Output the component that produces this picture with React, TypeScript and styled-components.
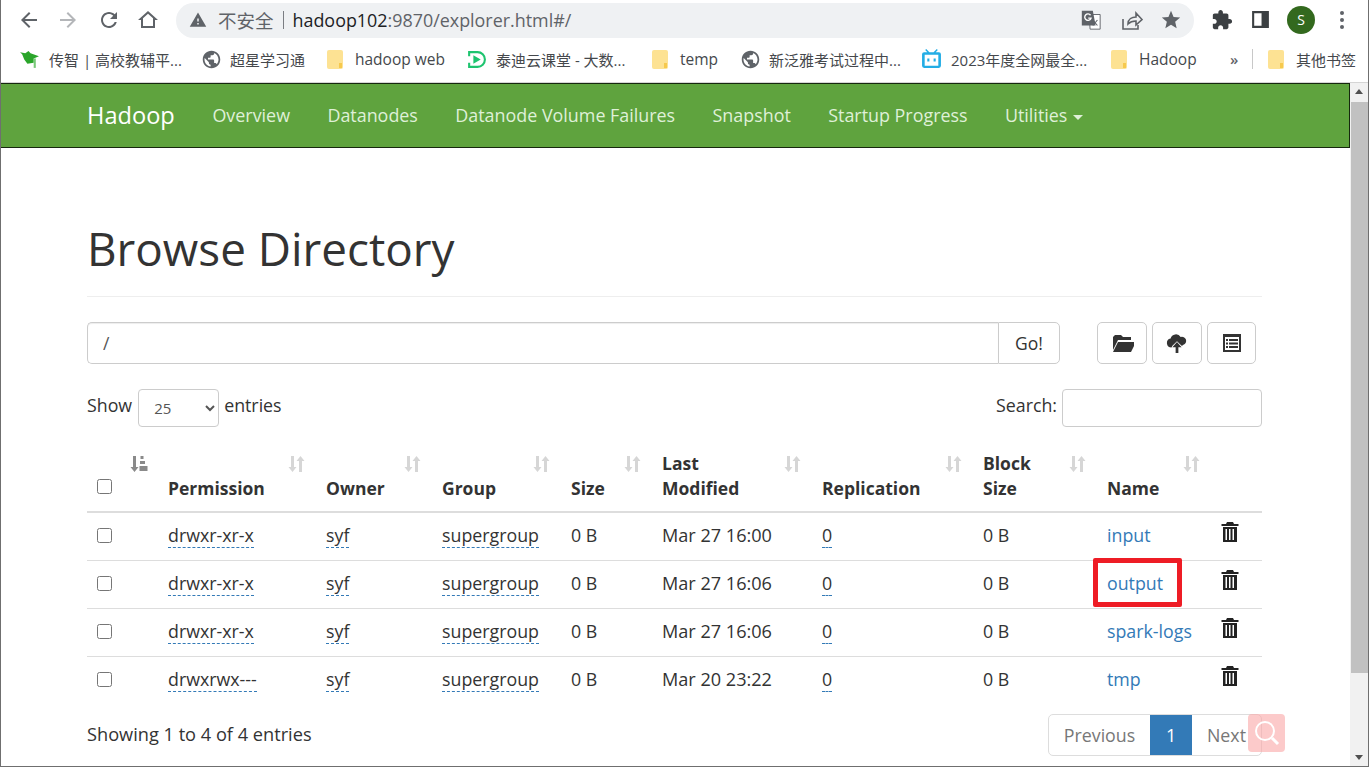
import React from 'react'
import styled, { createGlobalStyle } from 'styled-components'

const GlobalStyle = createGlobalStyle`
  html, body {
    margin: 0;
    height: 100%;
    overflow: hidden;
    background: #fff;
  }
  * {
    box-sizing: border-box;
  }
`

const Window = styled.div`
  width: 1369px;
  height: 767px;
  display: flex;
  flex-direction: column;
  overflow: hidden;
  background: #fff;
  border-left: 1px solid #6f6f6f;
  border-right: 1px solid #6f6f6f;
  border-bottom: 1px solid #6f6f6f;
  font-family: 'Open Sans', 'Noto Sans CJK SC', sans-serif;
  color: #333;
`

const Toolbar = styled.div`
  height: 39px;
  flex: none;
  display: flex;
  align-items: center;
  padding: 0 0 0 16px;
`

const ToolIcon = styled.svg<{ $size?: number; $gap?: number; $color?: string }>`
  width: ${(p) => p.$size ?? 24}px;
  height: ${(p) => p.$size ?? 24}px;
  margin-right: ${(p) => p.$gap ?? 0}px;
  fill: ${(p) => p.$color ?? '#5f6368'};
  flex: none;
`

const Omnibox = styled.div`
  width: 1018px;
  height: 35px;
  margin: 1px 17px 0 16px;
  padding: 0 12px 0 13px;
  border-radius: 18px;
  background: #eff1f3;
  display: flex;
  align-items: center;
  font-size: 17.9px;
  color: #5f6368;
  white-space: nowrap;
`

const Insecure = styled.span`
  margin-left: 11px;
  font-size: 18.5px;
`

const Divider = styled.span`
  width: 1px;
  height: 18px;
  margin: 0 9px 0 9px;
  background: #7a7d82;
`

const Host = styled.span`
  color: #202124;
`

const OmniIcons = styled.div`
  margin-left: auto;
  display: flex;
  align-items: center;
  gap: 17px;
`

const Avatar = styled.div`
  width: 28px;
  height: 28px;
  margin: 0 15px 0 16px;
  border-radius: 50%;
  background: #33691e;
  color: #fff;
  font-size: 14px;
  display: flex;
  align-items: center;
  justify-content: center;
`

const Bookmarks = styled.div`
  height: 44px;
  flex: none;
  padding: 0 0 3px 18px;
  display: grid;
  grid-template-columns: 182px 126px 139px 186px 88px 181px 190px 116px 25px 16px 1fr;
  align-items: center;
  border-bottom: 1px solid #d5d5d5;
`

const Bookmark = styled.div<{ $latin?: boolean }>`
  display: flex;
  align-items: center;
  gap: 9px;
  font-size: ${(p) => (p.$latin ? '15.5px' : '15px')};
  color: #45484c;
  white-space: nowrap;
  overflow: hidden;
`

const FolderMark = styled.svg`
  width: 16px;
  height: 19px;
  margin-right: 3px;
  flex: none;
`

const GlobeMark = styled.svg`
  width: 21px;
  height: 21px;
  margin-right: -1px;
  fill: #5f6368;
  flex: none;
`

const Chevron = styled.span`
  margin-left: 3px;
  font-size: 15px;
  font-weight: 600;
  color: #5f6368;
`

const BarRule = styled.span`
  width: 1px;
  height: 20px;
  background: #c8c8c8;
`

const Viewport = styled.div`
  flex: 1;
  min-height: 0;
  display: flex;
  position: relative;
`

const Page = styled.div`
  flex: 1;
  min-width: 0;
  font-size: 17.8px;
  line-height: 25px;
`

const Navbar = styled.nav`
  height: 65px;
  display: flex;
  align-items: center;
  padding: 0 0 0 86px;
  background: #5fa33e;
  border: 1px solid #16280e;
  border-left: 0;
`

const Brand = styled.a`
  font-size: 23.6px;
  color: #fff;
  margin-right: 19px;
`

const NavLink = styled.a`
  padding: 0 18.7px;
  color: #dff0d8;
  font-size: 17.9px;
  white-space: nowrap;
`

const Caret = styled.span`
  display: inline-block;
  margin-left: 6px;
  vertical-align: middle;
  border-top: 5px solid #dff0d8;
  border-left: 5px solid transparent;
  border-right: 5px solid transparent;
`

const Container = styled.div`
  width: 1175px;
  margin-left: 86px;
`

const Header = styled.div`
  height: 149px;
  padding-top: 68px;
  border-bottom: 1px solid #eee;
`

const Title = styled.h1`
  margin: 0;
  font-size: 45.8px;
  font-weight: 400;
  line-height: 64px;
  color: #333;
`

const PathRow = styled.div`
  margin-top: 25px;
  display: flex;
  height: 42px;
`

const PathInput = styled.input`
  width: 911px;
  height: 42px;
  padding: 0 15px;
  border: 1px solid #ccc;
  border-right: 0;
  border-radius: 5px 0 0 5px;
  font: inherit;
  font-size: 17.5px;
  color: #555;
  box-shadow: inset 0 1px 1px rgba(0, 0, 0, 0.075);
`

const Button = styled.button<{ $group?: boolean; $narrow?: boolean }>`
  height: 42px;
  padding: 0;
  background: #fff;
  border: 1px solid #ccc;
  border-radius: ${(p) => (p.$group ? '0 5px 5px 0' : '5px')};
  width: ${(p) => (p.$group ? '62px' : p.$narrow ? '49px' : '50px')};
  font: inherit;
  font-size: 17.5px;
  color: #333;
  display: flex;
  align-items: center;
  justify-content: center;
`

const ButtonGroup = styled.div`
  margin-left: 37px;
  display: flex;
  gap: 5px;
`

const FilterRow = styled.div`
  margin-top: 25px;
  height: 38px;
  display: flex;
  align-items: center;
  justify-content: space-between;
`

const FilterGroup = styled.label`
  display: flex;
  align-items: center;
  gap: 5px;
  padding-bottom: 6px;
`

const EntrySelect = styled.select`
  width: 81px;
  height: 38px;
  padding: 0 10px 0 11px;
  margin: 6px 0 0 1px;
  border: 1px solid #ccc;
  border-radius: 4px;
  background: #fff;
  font: inherit;
  font-size: 15px;
  color: #555;
`

const SearchInput = styled.input`
  width: 200px;
  height: 38px;
  margin-top: 6px;
  border: 1px solid #ccc;
  border-radius: 4px;
`

const Table = styled.table`
  width: 1175px;
  margin-top: 19px;
  table-layout: fixed;
  border-collapse: collapse;
`

const HeadCell = styled.th`
  position: relative;
  height: 66px;
  padding: 0 8px 10px;
  text-align: left;
  vertical-align: bottom;
  font-size: 17.5px;
  font-weight: 700;
  white-space: pre-line;
  border-bottom: 2px solid #ddd;
`

const BodyRow = styled.tr`
  height: 48px;
  border-bottom: 1px solid #ddd;

  &:last-child {
    border-bottom: 0;
  }
`

const BodyCell = styled.td`
  position: relative;
  padding: 0 8px 2px;
  white-space: nowrap;
`

const DateCell = styled(BodyCell)`
  font-size: 18.1px;
`

const SortMark = styled.svg<{ $dark?: boolean }>`
  position: absolute;
  top: 9px;
  right: 12px;
  width: 18px;
  height: 18px;
  fill: ${(p) => (p.$dark ? '#8a8a8a' : '#d6d6d6')};
`

const Check = styled.input`
  display: block;
  width: 15px;
  height: 15px;
  margin: 0 0 0 2px;
`

const HeadCheck = styled(Check)`
  margin-bottom: 7px;
`

const Dashed = styled.span`
  display: inline-block;
  line-height: 24px;
  border-bottom: 1px dashed #337ab7;
`

const FileLink = styled.a`
  color: #337ab7;
`

const TrashWrap = styled.span`
  display: block;
  margin-left: -1px;
`

const Highlight = styled.span`
  position: absolute;
  left: -6px;
  top: -3px;
  width: 89px;
  height: 49px;
  border: 5.5px solid #ee1c25;
  border-radius: 2px;
  pointer-events: none;
`

const Footer = styled.div`
  margin-top: 10px;
  display: flex;
  justify-content: space-between;
  align-items: flex-start;
`

const Info = styled.div`
  padding-top: 8px;
  font-size: 18.2px;
`

const Pagination = styled.div`
  display: flex;
  height: 42px;
  border: 1px solid #ddd;
  border-radius: 5px;
`

const PageItem = styled.a<{ $active?: boolean; $width: number }>`
  width: ${(p) => p.$width}px;
  display: flex;
  align-items: center;
  justify-content: center;
  color: ${(p) => (p.$active ? '#fff' : '#777')};
  background: ${(p) => (p.$active ? '#337ab7' : 'transparent')};
`

const Floating = styled.div`
  position: absolute;
  left: 1247px;
  top: 631px;
  width: 37px;
  height: 38px;
  border-radius: 4px;
  background: rgba(250, 170, 170, 0.62);
  display: flex;
  align-items: center;
  justify-content: center;
`

const ScrollTrack = styled.div`
  width: 18px;
  flex: none;
  background: #f1f1f1;
  display: flex;
  flex-direction: column;
  align-items: center;
`

const ScrollArrow = styled.div<{ $down?: boolean }>`
  height: 17px;
  flex: none;
  margin-top: ${(p) => (p.$down ? 'auto' : '0')};
  display: flex;
  align-items: center;

  &::before {
    content: '';
    border-left: 4.5px solid transparent;
    border-right: 4.5px solid transparent;
    border-${(p) => (p.$down ? 'top' : 'bottom')}: 5px solid #505050;
  }
`

const ScrollThumb = styled.div`
  width: 17px;
  height: 571px;
  margin-top: 2px;
  background: #c1c1c1;
`

const Icon = {
  back: 'M20 11H7.83l5.59-5.59L12 4l-8 8 8 8 1.41-1.41L7.83 13H20v-2z',
  reload:
    'M17.65 6.35C16.2 4.9 14.21 4 12 4c-4.42 0-7.99 3.58-7.99 8s3.57 8 7.99 8c3.73 0 6.84-2.55 7.73-6h-2.08c-.82 2.33-3.04 4-5.65 4-3.31 0-6-2.69-6-6s2.69-6 6-6c1.66 0 3.14.69 4.22 1.78L13 11h7V4l-2.35 2.35z',
  home: 'M12 3L2 12h3v8h14v-8h3L12 3zm0 2.7l5 4.5V18H7v-7.8l5-4.5z',
  warning: 'M1 21h22L12 2 1 21zm12-3h-2v-2h2v2zm0-4h-2v-4h2v4z',
  star: 'M12 17.27L18.18 21l-1.64-7.03L22 9.24l-7.19-.61L12 2 9.19 8.63 2 9.24l5.46 4.73L5.82 21z',
  puzzle:
    'M20.5 11H19V7c0-1.1-.9-2-2-2h-4V3.5C13 2.12 11.88 1 10.5 1S8 2.12 8 3.5V5H4c-1.1 0-1.99.9-1.99 2v3.8H3.5c1.49 0 2.7 1.21 2.7 2.7s-1.21 2.7-2.7 2.7H2V20c0 1.1.9 2 2 2h3.8v-1.5c0-1.49 1.21-2.7 2.7-2.7 1.49 0 2.7 1.21 2.7 2.7V22H17c1.1 0 2-.9 2-2v-4h1.5c1.38 0 2.5-1.12 2.5-2.5S21.88 11 20.5 11z',
  globe:
    'M12 2C6.48 2 2 6.48 2 12s4.48 10 10 10 10-4.48 10-10S17.52 2 12 2zm-1 17.93c-3.95-.49-7-3.85-7-7.93 0-.62.08-1.21.21-1.79L9 15v1c0 1.1.9 2 2 2v1.93zm6.9-2.54c-.26-.81-1-1.39-1.9-1.39h-1v-3c0-.55-.45-1-1-1H8v-2h2c.55 0 1-.45 1-1V7h2c1.1 0 2-.9 2-2v-.41c2.93 1.19 5 4.06 5 7.41 0 2.08-.8 3.97-2.1 5.39z',
}

const Folder = () => (
  <FolderMark viewBox="0 0 16 19">
    <path d="M2 0h9l3 0a2 2 0 0 1 2 2v15a2 2 0 0 1-2 2H2a2 2 0 0 1-2-2V2a2 2 0 0 1 2-2z" fill="#fde293" />
    <path d="M12 13h3v5h-3z" fill="#f6c94e" />
  </FolderMark>
)

const Globe = () => (
  <GlobeMark viewBox="0 0 24 24">
    <path d={Icon.globe} />
  </GlobeMark>
)

const SortIcon = ({ dark }: { dark?: boolean }) => (
  <SortMark viewBox="0 0 18 18" $dark={dark}>
    <path d="M3 1h3v11h2.500l-4 5-4-5H3z" />
    {dark ? (
      <path d="M10.500 1h3v3h-3zM10 6h5v3h-5zM9.500 11h8v5h-8z" />
    ) : (
      <path d="M11 6H8.500l4-5 4 5H14v11h-3z" />
    )}
  </SortMark>
)

const TrashIcon = () => (
  <ToolIcon viewBox="0 0 18 20" $size={20} $color="#222">
    <path d="M6 0h6l1 2h4.500v2H.5V2H5zM2 5h14v15H2zm2.500 2v11h1.500V7zm3.500 0v11h1.500V7zm3.500 0v11h1.500V7z" fillRule="evenodd" />
  </ToolIcon>
)

const columns = [73, 158, 116, 129, 91, 160, 161, 124, 114, 49]
const headers = ['Permission', 'Owner', 'Group', 'Size', 'Last\nModified', 'Replication', 'Block\nSize', 'Name']

const rows = [
  { perm: 'drwxr-xr-x', date: 'Mar 27 16:00', name: 'input' },
  { perm: 'drwxr-xr-x', date: 'Mar 27 16:06', name: 'output', marked: true },
  { perm: 'drwxr-xr-x', date: 'Mar 27 16:06', name: 'spark-logs' },
  { perm: 'drwxrwx---', date: 'Mar 20 23:22', name: 'tmp' },
]

const App = () => {
  return (
    <Window>
      <GlobalStyle />
      <Toolbar>
        <ToolIcon viewBox="0 0 24 24" $gap={15}><path d={Icon.back} /></ToolIcon>
        <ToolIcon viewBox="0 0 24 24" $gap={17} $color="#b4b6b9" style={{ transform: 'scaleX(-1)' }}><path d={Icon.back} /></ToolIcon>
        <ToolIcon viewBox="0 0 24 24" $gap={15}><path d={Icon.reload} /></ToolIcon>
        <ToolIcon viewBox="0 0 24 24"><path d={Icon.home} /></ToolIcon>
        <Omnibox>
          <ToolIcon viewBox="0 0 24 24" $size={18}><path d={Icon.warning} /></ToolIcon>
          <Insecure>不安全</Insecure>
          <Divider />
          <Host>hadoop102</Host>:9870/explorer.html#/
          <OmniIcons>
            <ToolIcon viewBox="0 0 24 24" $size={22}>
              <path d="M10 6h12v16H11z" fill="#fff" stroke="#5f6368" />
              <path d="M2 2h12l3 16H2z" />
              <path d="M11.500 6.800a3.500 3.500 0 1 0 .5 3.200H9" fill="none" stroke="#fff" strokeWidth="1.500" />
              <path d="M14 12l5 6M19 12l-5 6" fill="none" stroke="#5f6368" strokeWidth="1.200" />
            </ToolIcon>
            <ToolIcon viewBox="0 0 24 24" $size={24}>
              <path d="M4 11v10h15v-4M9 16c0-5 4-7 8-7V5l6 6.500L17 17v-4c-3 0-6 1-8 3z" fill="none" stroke="#5f6368" strokeWidth="1.600" />
            </ToolIcon>
            <ToolIcon viewBox="0 0 24 24" $size={22}><path d={Icon.star} /></ToolIcon>
          </OmniIcons>
        </Omnibox>
        <ToolIcon viewBox="0 0 24 24" $size={22} $gap={17} $color="#3c4043"><path d={Icon.puzzle} /></ToolIcon>
        <ToolIcon viewBox="0 0 20 20" $size={21} $color="#3c4043">
          <path d="M2 2h16v16H2zm2 2v12h7V4z" fillRule="evenodd" />
        </ToolIcon>
        <Avatar>S</Avatar>
        <ToolIcon viewBox="0 0 24 24" $size={24}>
          <circle cx="12" cy="5" r="2" />
          <circle cx="12" cy="12" r="2" />
          <circle cx="12" cy="19" r="2" />
        </ToolIcon>
      </Toolbar>
      <Bookmarks>
        <Bookmark>
          <ToolIcon viewBox="0 0 20 20" $size={21} $color="#2aa52a">
            <path d="M1 3l5 1 3-2 2 2 8 3-5 2v4l-6 1-3-4-2-5z" />
            <path d="M14 9h2v9h-2z" fill="#78c878" />
          </ToolIcon>
          传智 | 高校教辅平...
        </Bookmark>
        <Bookmark><Globe />超星学习通</Bookmark>
        <Bookmark $latin><Folder />hadoop web</Bookmark>
        <Bookmark>
          <ToolIcon viewBox="0 0 20 20" $size={21} $color="#1ec46f">
            <path d="M2 2h9a8 8 0 0 1 0 16H2v-5h2v3h7a6 6 0 0 0 0-12H4v3H2z" />
            <path d="M7 6l7 4-7 4z" />
          </ToolIcon>
          泰迪云课堂 - 大数...
        </Bookmark>
        <Bookmark $latin><Folder />temp</Bookmark>
        <Bookmark><Globe />新泛雅考试过程中...</Bookmark>
        <Bookmark>
          <ToolIcon viewBox="0 0 20 20" $size={21} $color="#23ade5">
            <path d="M5 0l3 3h4l3-3 1 1-2 2h3a2 2 0 0 1 2 2v11a2 2 0 0 1-2 2H3a2 2 0 0 1-2-2V5a2 2 0 0 1 2-2h3L4 1zM3.500 5.500v10.500h13V5.500z" fillRule="evenodd" />
            <path d="M6 9h2v3H6zM12 9h2v3h-2z" />
          </ToolIcon>
          2023年度全网最全...
        </Bookmark>
        <Bookmark $latin><Folder />Hadoop</Bookmark>
        <Chevron>»</Chevron>
        <BarRule />
        <Bookmark><Folder />其他书签</Bookmark>
      </Bookmarks>
      <Viewport>
        <Page>
          <Navbar>
            <Brand>Hadoop</Brand>
            <NavLink>Overview</NavLink>
            <NavLink>Datanodes</NavLink>
            <NavLink>Datanode Volume Failures</NavLink>
            <NavLink>Snapshot</NavLink>
            <NavLink>Startup Progress</NavLink>
            <NavLink>Utilities<Caret /></NavLink>
          </Navbar>
          <Container>
            <Header>
              <Title>Browse Directory</Title>
            </Header>
            <PathRow>
              <PathInput defaultValue="/" />
              <Button $group>Go!</Button>
              <ButtonGroup>
                <Button>
                  <ToolIcon viewBox="-2 0 24 20" $size={24} $color="#333">
                    <path d="M3 2h6l2 2h8v3H6L1 17V4z" />
                    <path d="M6 9h18l-5 10H1z" />
                  </ToolIcon>
                </Button>
                <Button>
                  <ToolIcon viewBox="0 0 24 24" $size={22} $color="#333">
                    <path d="M6 17a5 5 0 0 1-1-9.900A6 6 0 0 1 16 5.500a4.500 4.500 0 0 1 3 8.500 3 3 0 0 1-2 1l-5-5-5 5z" />
                    <path d="M12 11l5 5.500h-3.500V23h-3v-6.500H7z" />
                  </ToolIcon>
                </Button>
                <Button $narrow>
                  <ToolIcon viewBox="0 0 18 18" $size={18} $color="#333">
                    <path d="M0 0h18v18H0zm2 3v13h14V3zm1 2h2v2H3zm3 0h9v2H6zM3 8.500h2v2H3zm3 0h9v2H6zM3 12h2v2H3zm3 0h9v2H6z" fillRule="evenodd" />
                  </ToolIcon>
                </Button>
              </ButtonGroup>
            </PathRow>
            <FilterRow>
              <FilterGroup>
                Show
                <EntrySelect defaultValue="25">
                  <option value="25">25</option>
                </EntrySelect>
                entries
              </FilterGroup>
              <FilterGroup>
                Search:
                <SearchInput />
              </FilterGroup>
            </FilterRow>
            <Table>
              <colgroup>
                {columns.map((w, i) => (
                  <col key={i} width={w} />
                ))}
              </colgroup>
              <thead>
                <tr>
                  <HeadCell>
                    <HeadCheck type="checkbox" />
                    <SortIcon dark />
                  </HeadCell>
                  {headers.map((h) => (
                    <HeadCell key={h}>
                      {h}
                      <SortIcon />
                    </HeadCell>
                  ))}
                  <HeadCell />
                </tr>
              </thead>
              <tbody>
                {rows.map((r) => (
                  <BodyRow key={r.name}>
                    <BodyCell><Check type="checkbox" /></BodyCell>
                    <BodyCell><Dashed>{r.perm}</Dashed></BodyCell>
                    <BodyCell><Dashed>syf</Dashed></BodyCell>
                    <BodyCell><Dashed>supergroup</Dashed></BodyCell>
                    <BodyCell>0 B</BodyCell>
                    <DateCell>{r.date}</DateCell>
                    <BodyCell><Dashed>0</Dashed></BodyCell>
                    <BodyCell>0 B</BodyCell>
                    <BodyCell>
                      <FileLink>{r.name}</FileLink>
                      {r.marked && <Highlight />}
                    </BodyCell>
                    <BodyCell><TrashWrap><TrashIcon /></TrashWrap></BodyCell>
                  </BodyRow>
                ))}
              </tbody>
            </Table>
            <Footer>
              <Info>Showing 1 to 4 of 4 entries</Info>
              <Pagination>
                <PageItem $width={101}>Previous</PageItem>
                <PageItem $width={42} $active>1</PageItem>
                <PageItem $width={69}>Next</PageItem>
              </Pagination>
            </Footer>
          </Container>
        </Page>
        <ScrollTrack>
          <ScrollArrow />
          <ScrollThumb />
          <ScrollArrow $down />
        </ScrollTrack>
        <Floating>
          <svg width="30" height="30" viewBox="0 0 30 30" fill="none" stroke="#fff" strokeWidth="2">
            <circle cx="13" cy="13" r="9" />
            <path d="M20 20l6 6" strokeWidth="3" />
          </svg>
        </Floating>
      </Viewport>
    </Window>
  )
}

export default App
